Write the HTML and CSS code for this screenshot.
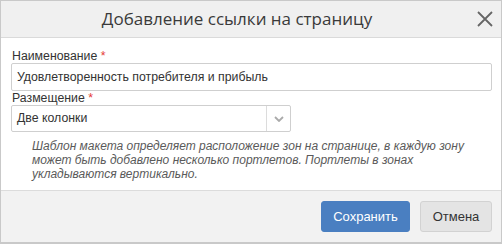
FILE: index.html
```html
<!DOCTYPE html>
<html lang="ru">
<head>
  <meta charset="UTF-8" />
  <title>Добавление ссылки на страницу</title>
  <link rel="stylesheet" href="styles.css">
</head>
<body>
  <div class="dialog">
    <div class="dialog-header">
      <span class="dialog-title">Добавление ссылки на страницу</span>
      <button class="close-btn" title="Закрыть">
        <svg width="16" height="16" viewBox="0 0 16 16"><path d="M1 1 L15 15 M15 1 L1 15" stroke="#666" stroke-width="1.8" fill="none"/></svg>
      </button>
    </div>

    <div class="dialog-body">
      <label class="field-label">Наименование <span class="req">*</span></label>
      <input class="text-input" type="text" value="Удовлетворенность потребителя и прибыль" />

      <label class="field-label">Размещение <span class="req">*</span></label>
      <div class="select">
        <span class="select-value">Две колонки</span>
        <span class="select-arrow">
          <svg width="10" height="6" viewBox="0 0 10 6"><path d="M1 1 L5 5 L9 1" stroke="#aaa" stroke-width="1.8" fill="none"/></svg>
        </span>
      </div>

      <p class="help">Шаблон макета определяет расположение зон на странице, в каждую зону может быть добавлено несколько портлетов. Портлеты в зонах укладываются вертикально.</p>
    </div>

    <div class="dialog-footer">
      <button class="btn btn-primary">Сохранить</button>
      <button class="btn btn-default">Отмена</button>
    </div>
  </div>
</body>
</html>
```
FILE: styles.css
```css
* {
  box-sizing: border-box;
}
body {
  margin: 0;
  font-family: 'Liberation Sans', Arial, sans-serif;
  font-size: 12.3px;
  color: #333;
  background: #fff;
}
.dialog {
  width: 502px;
  height: 244px;
  border: 1px solid #c9c9c9;
  border-bottom-width: 2px;
  display: flex;
  flex-direction: column;
}
.dialog-header {
  position: relative;
  height: 37px;
  padding-right: 28px;
  background: #f0f0f0;
  border-bottom: 1px solid #dadada;
  text-align: center;
}
.dialog-title {
  font-family: 'Open Sans', sans-serif;
  font-size: 17px;
  line-height: 36px;
  color: #3a3a3a;
}
.close-btn {
  position: absolute;
  right: 7px;
  top: 10px;
  width: 18px;
  height: 18px;
  padding: 0;
  border: none;
  background: none;
  cursor: pointer;
}
.dialog-body {
  flex: 1;
  padding: 11px 9px 0 10px;
}
.field-label {
  display: block;
  line-height: 14px;
  padding-left: 1px;
  margin-bottom: 0;
}
.req {
  color: #e53935;
}
.text-input {
  display: block;
  width: 100%;
  height: 28px;
  margin: 0;
  padding: 0 5px;
  border: 1px solid #cfcfcf;
  border-radius: 2px;
  font-family: inherit;
  font-size: 12.3px;
  color: #333;
}
.select {
  display: flex;
  width: 280px;
  height: 27px;
  border: 1px solid #cfcfcf;
  border-radius: 2px;
}
.select-value {
  flex: 1;
  padding-left: 5px;
  line-height: 25px;
}
.select-arrow {
  width: 24px;
  border-left: 1px solid #dcdcdc;
  display: flex;
  align-items: center;
  justify-content: center;
}
.help {
  margin: 7px 0 0 21px;
  font-size: 12px;
  line-height: 14px;
  font-style: italic;
  color: #5a5a5a;
}
.dialog-footer {
  height: 52px;
  background: #f2f2f2;
  border-top: 1px solid #dcdcdc;
  display: flex;
  justify-content: flex-end;
  align-items: flex-start;
  gap: 10px;
  padding: 10px 9px 0 0;
}
.btn {
  height: 31px;
  border-radius: 3px;
  font-family: inherit;
  font-size: 13px;
  cursor: pointer;
}
.btn-primary {
  width: 89px;
  background: #4a7fc1;
  border: 1px solid #4a7fc1;
  color: #fff;
}
.btn-default {
  width: 72px;
  background: #e4e4e4;
  border: 1px solid #d2d2d2;
  color: #333;
}
```
